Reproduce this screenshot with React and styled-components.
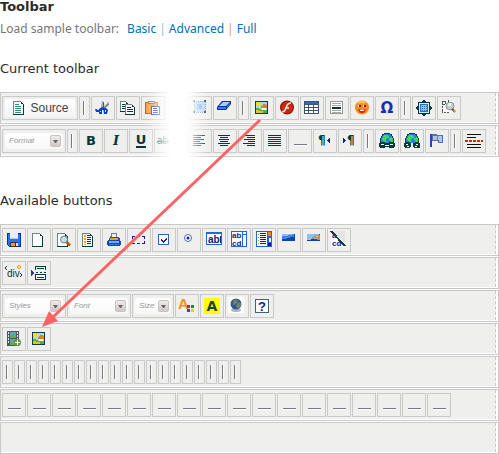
import React from "react";
import styled, { createGlobalStyle, css } from "styled-components";

const GlobalStyle = createGlobalStyle`
  * { box-sizing: border-box; }
  body { margin: 0; background: #fff; }
`;

const Page = styled.main`
  position: relative;
  font-family: "DejaVu Sans", "Open Sans", sans-serif;
  font-size: 13px;
  line-height: 16px;
  color: #2b2b2b;
`;
const Title = styled.h2`
  margin: 0;
  font-size: 13px;
  line-height: 14px;
`;
const Samples = styled.p`
  display: flex;
  gap: 8px;
  margin: 7px 0 0;
  font: 12px/16px "Noto Sans", "Open Sans", sans-serif;
  color: #777;
`;
const SampleLinks = styled.span`
  display: flex;
  gap: 3px;
`;
const SampleLink = styled.a`
  color: #0071b8;
  text-decoration: none;
`;
const Divider = styled.span`
  color: ${(p) => p.$color};
`;
const Heading = styled.h3`
  margin: ${(p) => p.$above}px 0 15px;
  font-size: 13px;
  font-weight: 400;
  line-height: 16px;
`;
const Toolbars = styled.div`
  position: relative;
  display: grid;
  gap: 1px;
`;
const Row = styled.div`
  display: flex;
  height: 32px;
  padding-right: 2px;
  padding-bottom: 1px;
  border: 1px solid #c9c9c9;
  background: #fff;
`;
const RowBody = styled.div`
  flex: 1;
  display: flex;
  gap: 1px;
  padding: 3px 1px 0;
  border-right: 1px dashed #c9c9c9;
  background: #efefed;
`;
const box = css`
  flex: none;
  height: 24px;
  padding: 0;
  border: 1px solid #c9c9c9;
  background: #efefed;
`;
const ToolButton = styled.button`
  ${box}
  display: grid;
  place-items: center;
  width: 24px;
  svg { display: block; }
`;
const SourceButton = styled.button`
  ${box}
  width: 76px;
  padding: 2px;
`;
const SourceFace = styled.span`
  display: flex;
  align-items: center;
  justify-content: center;
  gap: 3px;
  height: 18px;
  border-radius: 3px;
  background: linear-gradient(#fff, #f4f4f4);
  font: 12px "Liberation Sans", sans-serif;
  color: #444;
`;
const Letter = styled.span`
  font: ${(p) => (p.$italic ? "italic" : "normal")} bold ${(p) => p.$size || 13}px/16px
    ${(p) => (p.$serif ? '"DejaVu Serif", serif' : '"DejaVu Sans", sans-serif')};
  color: ${(p) => p.$color || "#053737"};
  border-bottom: ${(p) => (p.$under ? "2px solid #053737" : "0")};
  line-height: ${(p) => (p.$under ? "12px" : "16px")};
`;
const Swatch = styled.span`
  width: 16px;
  height: 16px;
  background: #ff0;
  color: #263e3d;
  font: bold 14px/16px "DejaVu Sans", sans-serif;
`;
const Separator = styled.div`
  ${box}
  width: 11px;
  padding: 4px 3px;
  &::before {
    content: "";
    display: block;
    width: 2px;
    height: 14px;
    background: linear-gradient(90deg, #77778c 50%, #fff 50%);
  }
`;
const Spacer = styled.div`
  ${box}
  display: flex;
  justify-content: center;
  width: 24px;
  padding-top: 14px;
  &::before {
    content: "";
    width: 13px;
    height: 2px;
    background: linear-gradient(#77778c 50%, #fff 50%);
  }
`;
const Combo = styled.label`
  ${box}
  display: grid;
  width: ${(p) => p.$width}px;
  padding: 2px;
  align-items: center;
  > * { grid-area: 1 / 1; }
`;
const ComboSelect = styled.select`
  appearance: none;
  width: 100%;
  height: 16px;
  margin: 0;
  padding: 0 14px 0 4px;
  border: 0;
  border-radius: 3px;
  background: linear-gradient(#fff, #f8f8f8);
  font: italic 8px/16px "Liberation Sans", sans-serif;
  color: #999;
`;
const ComboArrow = styled.span`
  justify-self: end;
  display: grid;
  place-items: center;
  width: 11px;
  height: 12px;
  margin-right: 2px;
  border: 1px solid #c9c1c1;
  border-radius: 2px;
  background: linear-gradient(#f0eaea, #cfc8c8);
  pointer-events: none;
`;
const Hidden = styled.div`
  flex: none;
  width: ${(p) => p.$width}px;
`;
const Fade = styled.div`
  position: absolute;
  inset: -2px auto -2px 145px;
  width: 64px;
  background: linear-gradient(90deg, rgba(255,255,255,0), #fff 40%, #fff 65%, rgba(255,255,255,0));
  pointer-events: none;
`;
const Pointer = styled.svg`
  position: absolute;
  top: 0;
  left: 0;
  pointer-events: none;
`;

const D = "#063b3b";
const B = "#1a1a9c";
const Sheet = ({ x = 2, y = 1, w = 11, h = 14 }) => (
  <>
    <rect x={x} y={y} width={w} height={h} fill={D} />
    <rect x={x} y={y} width={w - 1} height={h - 1} fill="#6b8585" />
    <rect x={x + 1} y={y + 1} width={w - 2} height={h - 2} fill="#fff" />
    <path d={`M${x + w - 3} ${y}h3v3h-1v-1h-1v-1h-1z`} fill="#efefed" />
    <path d={`M${x + w - 3} ${y + 1}h1v1h1v1h-2z`} fill={D} />
  </>
);
const alignLines = (starts, widths) => (
  <path d={widths.map((w, i) => `M${starts[i]} ${i * 2 + 2}h${w}v1h-${w}z`).join("")} fill={D} />
);
const abText = { fontFamily: "Liberation Sans, sans-serif", fontWeight: "bold", fill: "#14148c" };
const pilcrow = { fontFamily: "DejaVu Sans, sans-serif", fontWeight: "bold", fontSize: "12", fill: D };
const Globe = () => (
  <>
    <path d="M5 0h6v1h2v2h1v2h1v6H1V5h1V3h1V1h2z" fill="#064343" />
    <path d="M5 1h6v1h1v1h1v2h1v5H2V5h1V3h1V2h1z" fill="#2a80e4" />
    <path d="M4 3h1V2h4v1h1v2H8v1H7v3H5V8H4V7H3V5h1zM10 5h2V4h1v1h1v4h-2V8h-1V7h-1z" fill="#3fd758" />
  </>
);

const icons = {
  Source: (
    <>
      <Sheet x={2} y={1} w={11} h={14} />
      <path d="M4 4h4v1H4zM4 6h6v1H4zM4 8h6v1H4zM4 10h6v1H4zM4 12h6v1H4z" fill="#3c8d76" />
    </>
  ),
  Cut: (
    <g shapeRendering="auto">
      <path d="M7 1h1l2 6-2 2-2-2zM13 2h1v3l-5 4-1-1z" fill="#9eacb3" />
      <path d="M8.5 2v6M13.5 4l-5 5" stroke="#49606b" />
      <path d="M0 9h4l3-2 2 1v2H7v4H4v-2H1z" fill="#0a3fd0" />
      <path d="M8 8h3l2 2-1 4H9z" fill="#0c3fc4" />
      <path d="M2 9h2v1H2zM5 11h1v1H5zM10 10h1v2h-1z" fill="#d6e4ff" />
    </g>
  ),
  Copy: (
    <>
      <Sheet x={0} y={1} w={9} h={11} />
      <path d="M2 4h3v1H2zM2 6h4v1H2zM2 8h4v1H2z" fill={D} />
      <Sheet x={5} y={4} w={10} h={11} />
      <path d="M7 7h4v1H7zM7 9h6v1H7zM7 11h6v1H7z" fill={D} />
    </>
  ),
  Paste: (
    <>
      <path d="M0 2h13v12H0z" fill="#b66310" />
      <path d="M1 3h11v10H1z" fill="#f7a13a" />
      <path d="M3 1h7v3H3z" fill="#777" />
      <path d="M4 2h5v1H4z" fill="#ddd" />
      <path d="M6 6h9v9H6z" fill="#223f9d" />
      <path d="M7 7h7v7H7z" fill="#fff" />
      <path d="M8 8h4v1H8zM8 10h5v1H8zM8 12h5v1H8z" fill="#2a45a5" />
    </>
  ),
  Strike: (
    <>
      <text x="-1" y="11" fontSize="10" fontFamily="Liberation Sans, sans-serif" fill={D}>abc</text>
      <path d="M-1 8h17v1H-1z" fill={D} />
    </>
  ),
  "Select All": (
    <>
      <rect x="2" y="1" width="11" height="11" fill="#b9d5f7" />
      <rect x="2" y="1" width="11" height="11" fill="none" stroke="#6c8ba3" strokeDasharray="1 1" />
      <path d="M1 0h2v2H1zM12 0h2v2h-2zM1 11h2v2H1zM12 11h2v2h-2z" fill="#234d69" />
      <path d="M5 4h5v5H5z" fill="#80b5ff" />
    </>
  ),
  "Remove Format": (
    <g shapeRendering="auto">
      <path d="M5 1h9v3L9 10H0V7z" fill="#0e2f99" />
      <path d="M6 2h7L9 6H2z" fill="#a9cbff" />
      <path d="M1 7h8v2H1zM10 6l3-3v1L10 8z" fill="#3c7bec" />
    </g>
  ),
  Image: (
    <>
      <rect x="1" y="1" width="13" height="13" fill="#103d40" />
      <rect x="2" y="2" width="11" height="11" fill="#9edcec" />
      <path d="M2 2h4v1h1v2H6v1H2z" fill="#ffd53c" />
      <path d="M7 6h1V5h1V4h3v1h1v3H7z" fill="#ef7a24" />
      <path d="M8 8h4v2H8z" fill="#fff" />
      <path d="M2 8h3v1h2v1h6v3H2z" fill="#6aa52c" />
      <path d="M2 10h3v1h4v2H2z" fill="#d8c83c" />
    </>
  ),
  Flash: (
    <g shapeRendering="auto">
      <circle cx="8" cy="7.5" r="7" fill="#8b1206" />
      <circle cx="8" cy="7.5" r="6" fill="#c52a12" />
      <path d="M12 3C8 3 8 6 7 8c-1 3-2 4-4 4M6 8h4" fill="none" stroke="#ffe8dc" strokeWidth="1.5" />
    </g>
  ),
  Table: (
    <>
      <path d="M0 1h15v13H0z" fill="#40536e" />
      <path d="M1 2h13v2H1z" fill="#2f66cc" />
      <path d="M1 5h3v2H1zM5 5h4v2H5zM10 5h4v2h-4zM1 8h3v2H1zM5 8h4v2H5zM10 8h4v2h-4zM1 11h3v2H1zM5 11h4v2H5zM10 11h4v2h-4z" fill="#fff" />
    </>
  ),
  "Horizontal Line": (
    <>
      <path d="M1 1h13v13H1z" fill="#999" />
      <path d="M2 2h11v11H2z" fill="#fff" />
      <path d="M3 3h9v1H3zM3 5h9v1H3zM3 10h9v1H3zM3 12h9v1H3z" fill="#aaa" />
      <path d="M3 7h9v2H3z" fill={D} />
    </>
  ),
  Smiley: (
    <g shapeRendering="auto">
      <circle cx="8" cy="7.5" r="7" fill="#f68b1f" />
      <path d="M4 3q4-2 7 0" stroke="#ffc65b" fill="none" strokeWidth="2" />
      <path d="M4 5h3v2H4zM9 5h3v2H9z" fill="#fff" />
      <path d="M5 5h2v2H5zM10 5h2v2h-2z" fill="#742200" />
      <path d="M4 9q4 2 8 0q-1 4-4 4t-4-4" fill="#c92517" />
      <path d="M6 10h4v1H6z" fill="#fff" />
    </g>
  ),
  Maximize: (
    <>
      <path d="M8 0l3 2H5zM8 16l3-2H5zM0 8l2-3v6zM16 8l-2-3v6z" fill={D} />
      <path d="M2 2h12v12H2z" fill={D} />
      <path d="M3 3h10v10H3z" fill="#d5e8fb" />
      <path d="M4 4h8v8H4z" fill="#276ed1" />
      <path d="M5 5h6v6H5z" fill="#92c0fa" />
      <path d="M6 6h1v1H6zM8 6h1v1H8zM10 6h1v1h-1zM6 8h1v1H6zM8 8h1v1H8zM10 8h1v1h-1zM6 10h1v1H6zM8 10h1v1H8zM10 10h1v1h-1z" fill="#276ed1" />
    </>
  ),
  "Show Blocks": (
    <>
      <path d="M1 1h11v12H1z" fill="#fff" />
      <path d="M1 1h4v1H2v2h2v1H1zM4 2h1v2H4zM7 0h1v3H7zM1 6h1v2H1zM1 9h1v4H1zM3 12h2v1H3zM6 12h2v1H6z" fill="#4b5557" />
      <g shapeRendering="auto">
        <circle cx="9" cy="6" r="4" fill="#c5cbcc" stroke="#8a999b" />
        <path d="M8 3h2v3H7z" fill="#f4f7f7" />
        <path d="M11 9l3 3" stroke="#58494c" strokeWidth="2" />
        <path d="M13 10l1 2" stroke="#f29a24" strokeWidth="2" />
      </g>
    </>
  ),
  "Align Left": alignLines([1, 1, 1, 1, 1, 1], [12, 8, 11, 7, 12, 8]),
  Center: alignLines([1, 3, 2, 3, 1, 3], [12, 8, 10, 8, 12, 8]),
  "Align Right": alignLines([1, 5, 2, 6, 1, 5], [12, 8, 11, 7, 12, 8]),
  Justify: alignLines([1, 1, 1, 1, 1, 1], [13, 13, 13, 13, 13, 13]),
  "Left to Right": (
    <>
      <text x="1" y="11" {...pilcrow}>¶</text>
      <path d="M13 5v5l-3-2V7z" fill={B} />
    </>
  ),
  "Right to Left": (
    <>
      <path d="M1 5v5l3-2V7z" fill={B} />
      <text x="5" y="11" {...pilcrow}>¶</text>
    </>
  ),
  Link: (
    <>
      <Globe />
      <path d="M1 9h5v1h4V9h5v1h1v4h-1v1h-5v-1H6v1H1v-1H0v-4h1z" fill="#083c3b" />
      <path d="M2 11h3v1H2zM6 12h4v1H6zM11 11h3v1h-3z" fill="#fff" />
    </>
  ),
  Unlink: (
    <>
      <Globe />
      <path d="M1 9h4l2 2v3l-2 1H1l-1-1v-4zM11 9h4l1 2v3l-1 1h-4l-2-1v-3z" fill="#083c3b" />
      <path d="M7 10h2v5H7z" fill="#efefed" />
      <path d="M2 11h2v1H2zM12 11h2v1h-2zM3 13h2v1H3zM11 13h2v1h-2z" fill="#fff" />
    </>
  ),
  Anchor: (
    <>
      <path d="M1 1h2v13H1z" fill="#2c43bd" />
      <path d="M3 1h5v1h6v8H9V8H3z" fill="#4f70b2" />
      <path d="M4 3h4v4H4z" fill="#c0c0c8" />
      <path d="M9 3h4v6h-3V7H9z" fill="#aac8f2" />
      <path d="M8 3h1v4H8z" fill="#6e86b4" />
    </>
  ),
  "Page Break": (
    <>
      <path d="M1 1h14v1H1zM1 4h9v1H1zM1 11h14v1H1zM1 14h14v1H1z" fill="#111" />
      <path d="M-1 7h3v2h-3zM3 7h3v2H3zM7 7h3v2H7zM11 7h3v2h-3zM15 7h2v2h-2z" fill="#e42408" />
    </>
  ),
  Save: (
    <>
      <path d="M1 1h14v14H3l-2-2z" fill="#082f9c" />
      <path d="M2 2h12v12H3l-1-1z" fill="#2874e8" />
      <path d="M4 1h8v6H4z" fill="#e6efff" />
      <path d="M4 6h8v1H4z" fill="#aac6ef" />
      <path d="M4 10h8v5H4z" fill="#332f3e" />
      <path d="M5 11h4v3H5z" fill="#f59a28" />
      <path d="M10 11h2v3h-2z" fill="#ddd" />
    </>
  ),
  "New Page": <Sheet x={1} y={1} w={11} h={14} />,
  Preview: (
    <>
      <Sheet x={1} y={1} w={11} h={14} />
      <g shapeRendering="auto">
        <circle cx="8" cy="7.5" r="3.5" fill="#c8dede" stroke="#5f8585" />
        <path d="M10.5 10l3.5 3.5" stroke="#b35b0b" strokeWidth="2.5" />
      </g>
    </>
  ),
  Templates: (
    <>
      <Sheet x={1} y={1} w={11} h={14} />
      <path d="M3 3h2v2H3zM3 6h2v2H3zM3 9h2v2H3zM3 12h2v1H3z" fill="#f0a01e" />
      <path d="M6 3h3v1H6zM6 5h4v1H6zM6 7h4v1H6zM6 9h4v1H6zM6 11h4v1H6z" fill={D} />
    </>
  ),
  Print: (
    <>
      <path d="M5 1h6v5H4V4h1z" fill="#68849f" />
      <path d="M6 2h4v4H5V5h1z" fill="#edf3f8" />
      <path d="M4 5h9v1h1v3H2V8h1V6h1z" fill="#2451b3" />
      <path d="M4 6h8v2H4z" fill="#f29933" />
      <path d="M2 8h12l1 2v3l-2 1H3l-2-1v-3z" fill="#1549b4" />
      <path d="M3 9h10v2H3z" fill="#78adf6" />
      <path d="M3 12h10v1H3z" fill="#2a76ea" />
    </>
  ),
  Form: (
    <path d="M1 4h3v1H2v2H1zM6 4h3v1H6zM11 4h3v3h-1V5h-2zM1 9h1v2h2v1H1zM6 11h3v1H6zM13 9h1v3h-3v-1h2z" fill={B} />
  ),
  Checkbox: (
    <>
      <path d="M2 2h11v11H2z" fill="#2365c9" />
      <path d="M3 3h9v9H3z" fill="#fff" />
      <path d="M5 7l2 2 4-4v2l-4 4-2-2z" fill={B} />
    </>
  ),
  "Radio Button": (
    <g shapeRendering="auto">
      <circle cx="7" cy="6" r="3.5" fill="#fff" stroke="#496dbb" />
      <circle cx="7" cy="6" r="1.5" fill={B} />
    </g>
  ),
  "Text Field": (
    <>
      <path d="M0 0h16v13H0z" fill="#176ae4" />
      <path d="M1 2h14v10H1z" fill="#fff" />
      <text x="2" y="11" fontSize="10" {...abText}>ab</text>
      <path d="M14 4h1v7h-1z" fill={B} />
    </>
  ),
  Textarea: (
    <>
      <path d="M0-1h16v16H0z" fill="#176ae4" />
      <path d="M1 0h10v14H1zM12 3h3v11h-3z" fill="#fff" />
      <text x="1" y="6" fontSize="8" {...abText}>ab</text>
      <text x="1" y="14" fontSize="8" {...abText}>cd</text>
      <path d="M12 0h3v2h-3z" fill="#fff" />
    </>
  ),
  "Selection Field": (
    <>
      <path d="M0-1h16v16H0z" fill="#176ae4" />
      <path d="M1 0h10v14H1zM13 6h2v4h-2z" fill="#fff" />
      <path d="M2 2h1v1H2zM2 5h1v1H2zM2 8h1v1H2zM2 11h1v1H2zM12 0h3v4h-3z" fill="#e88714" />
      <path d="M4 1h6v1H4zM4 3h6v1H4zM4 5h6v1H4zM4 7h6v1H4zM4 9h6v1H4zM4 11h6v1H4z" fill={B} />
      <path d="M12 11h3v3h-3z" fill={B} />
    </>
  ),
  Button: (
    <>
      <path d="M1 2h13v7H1z" fill="#0a45ad" />
      <path d="M1 2h12v3H9v1H6v1H1z" fill="#3c84ee" />
      <path d="M1 2h10v1H7v1H1z" fill="#8abdff" />
    </>
  ),
  "Image Button": (
    <>
      <path d="M1 2h13v7H1z" fill="#0a45ad" />
      <path d="M1 2h12v5H5v1H1z" fill="#8fc1f9" />
      <path d="M6 5h2V4h1V3h5v5h-3V6H8v1H6z" fill="#ef831c" />
      <path d="M10 4h2v1h-2z" fill="#ffe084" />
    </>
  ),
  "Hidden Field": (
    <>
      <path d="M0-1h14v16H0z" fill="#fff" />
      <text x="1" y="6" fontSize="8" {...abText}>a</text>
      <text x="1" y="14" fontSize="8" {...abText}>cd</text>
      <path d="M1-1h13v13z" fill="#e3e3e3" />
      <path d="M0-1l14 15" stroke="#173e3e" strokeWidth="2" />
    </>
  ),
  "Div Container": (
    <>
      <text x="1" y="12" fontSize="10" fontFamily="Liberation Sans, sans-serif" fill={D}>div</text>
      <path d="M0 1h1v1H0zM-1 2h1v2H-1zM0 4h1v1H0zM14 8h1v1h-1zM15 9h1v2h-1zM14 11h1v1h-1z" fill={D} />
      <path d="M13 0l2 2-2 2-2-2z" fill="#ffd79d" stroke="#f39a1d" />
    </>
  ),
  "Insert Break": (
    <>
      <path d="M4 1h11v4h-1V2H5v3H4zM4 9h11v6H4zM6 3h7v1H6z" fill={D} />
      <path d="M5 10h9v4H5z" fill="#fff" />
      <path d="M6 12h7v1H6zM5 7h2v1H5zM9 7h2v1H9zM13 7h2v1h-2z" fill={D} />
      <path d="M0 5h1v1h1v1h1v2H2v1H1v1H0z" fill="#2440b4" />
    </>
  ),
  "Text Color": (
    <>
      <text x="-1" y="11" fontSize="15" fontFamily="Liberation Sans, sans-serif" fontWeight="bold" fill="#ef8e20">A</text>
      <path d="M8 7h3v3H8z" fill="#df2418" />
      <path d="M12 7h3v3h-3z" fill="#178d22" />
      <path d="M8 11h3v3H8z" fill="#1450d8" />
      <path d="M12 11h3v3h-3z" fill="#f7c911" />
    </>
  ),
  IFrame: (
    <>
      <path d="M-1-1h16v16h-16z" fill="#fff" />
      <g shapeRendering="auto">
        <ellipse cx="7" cy="12" rx="5" ry="2" fill="#b3b4bd" />
        <circle cx="7" cy="6" r="5.5" fill="#385694" />
        <path d="M4 3l3-2 2 2-2 3-3 1zM9 4l3 1v3l-3 3-2-3z" fill="#64876c" />
      </g>
    </>
  ),
  About: (
    <>
      <path d="M1 1h14v14H1z" fill="#3d6475" />
      <path d="M2 2h12v12H2z" fill="#fff" />
      <text x="4" y="13" fontSize="13" {...abText}>?</text>
    </>
  ),
  Media: (
    <>
      <path d="M1 0h12v15H1z" fill="#4b575c" />
      <path d="M4 1h6v6H4zM4 8h6v6H4z" fill="#53a9d6" />
      <path d="M4 5l3-2 3 2v2H4zM4 12l3-2 3 2v2H4z" fill="#66ae41" />
      <path d="M2 1h1v2H2zM2 4h1v2H2zM2 7h1v2H2zM2 10h1v2H2zM11 1h1v2h-1zM11 4h1v2h-1zM11 7h1v2h-1z" fill="#e5e8e8" />
      <g shapeRendering="auto">
        <circle cx="11.5" cy="11.5" r="3.5" fill="#5d983f" />
      </g>
      <path d="M11 9h1v2h2v1h-2v2h-1v-2H9v-1h2z" fill="#fff" />
    </>
  ),
};

const Icon = ({ name }) => (
  <svg width="16" height="16" viewBox="0 0 16 16" overflow="visible" shapeRendering="crispEdges" aria-hidden="true">
    {icons[name]}
  </svg>
);
const letters = {
  Bold: <Letter>B</Letter>,
  Italic: <Letter $italic $serif>I</Letter>,
  Underline: <Letter $under>U</Letter>,
  "Special Character": <Letter $color="#1530b0" $size={15}>Ω</Letter>,
  "Background Color": <Swatch>A</Swatch>,
};
const comboWidths = { Format: 64, Styles: 64, Font: 64, Size: 42 };

const Item = ({ name }) => {
  if (name === "|") return <Separator />;
  if (name === "_") return <Spacer />;
  if (typeof name === "number") return <Hidden $width={name} />;
  if (name === "Source")
    return (
      <SourceButton type="button">
        <SourceFace><Icon name="Source" />Source</SourceFace>
      </SourceButton>
    );
  if (comboWidths[name])
    return (
      <Combo $width={comboWidths[name]}>
        <ComboSelect aria-label={name}><option>{name}</option></ComboSelect>
        <ComboArrow>
          <svg width="5" height="3" viewBox="0 0 5 3" aria-hidden="true"><path d="M0 0h5L3 3H2z" fill="#666" /></svg>
        </ComboArrow>
      </Combo>
    );
  return (
    <ToolButton type="button" aria-label={name}>
      {letters[name] || <Icon name={name} />}
    </ToolButton>
  );
};

const current = [
  ["Source", "|", "Cut", "Copy", "Paste", 21, "Select All", "Remove Format", "|", "Image", "Flash", "Table", "Horizontal Line", "Smiley", "Special Character", "|", "Maximize", "Show Blocks"],
  ["Format", "|", "Bold", "Italic", "Underline", "Strike", 8, "Align Left", "Center", "Align Right", "Justify", "_", "Left to Right", "Right to Left", "|", "Link", "Unlink", "Anchor", "|", "Page Break"],
];
const available = [
  ["Save", "New Page", "Preview", "Templates", "Print", "Form", "Checkbox", "Radio Button", "Text Field", "Textarea", "Selection Field", "Button", "Image Button", "Hidden Field"],
  ["Div Container", "Insert Break"],
  ["Styles", "Font", "Size", "Text Color", "Background Color", "IFrame", "About"],
  ["Media", "Image"],
  Array(20).fill("|"),
  Array(18).fill("_"),
  [],
];

const ToolbarRows = ({ rows, label }) =>
  rows.map((row, i) => (
    <Row key={i} role="toolbar" aria-label={`${label} row ${i + 1}`}>
      <RowBody>{row.map((name, j) => <Item key={j} name={name} />)}</RowBody>
    </Row>
  ));

export default function App() {
  return (
    <Page>
      <GlobalStyle />
      <Title>Toolbar</Title>
      <Samples>
        <span>Load sample toolbar:</span>
        <SampleLinks>
          <SampleLink href="#basic">Basic</SampleLink>
          <Divider $color="#8fc4d8">|</Divider>
          <SampleLink href="#advanced">Advanced</SampleLink>
          <Divider $color="#e0a080">|</Divider>
          <SampleLink href="#full">Full</SampleLink>
        </SampleLinks>
      </Samples>
      <Heading $above={24}>Current toolbar</Heading>
      <Toolbars>
        <ToolbarRows rows={current} label="Current" />
        <Fade />
      </Toolbars>
      <Heading $above={36}>Available buttons</Heading>
      <Toolbars>
        <ToolbarRows rows={available} label="Available" />
      </Toolbars>
      <Pointer width="270" height="340" aria-hidden="true">
        <g fill="#ff6262">
          <path d="M260 120L52 318" stroke="#ff6262" strokeWidth="3" />
          <path d="M42 327l7-16 9 10z" />
        </g>
      </Pointer>
    </Page>
  );
}
